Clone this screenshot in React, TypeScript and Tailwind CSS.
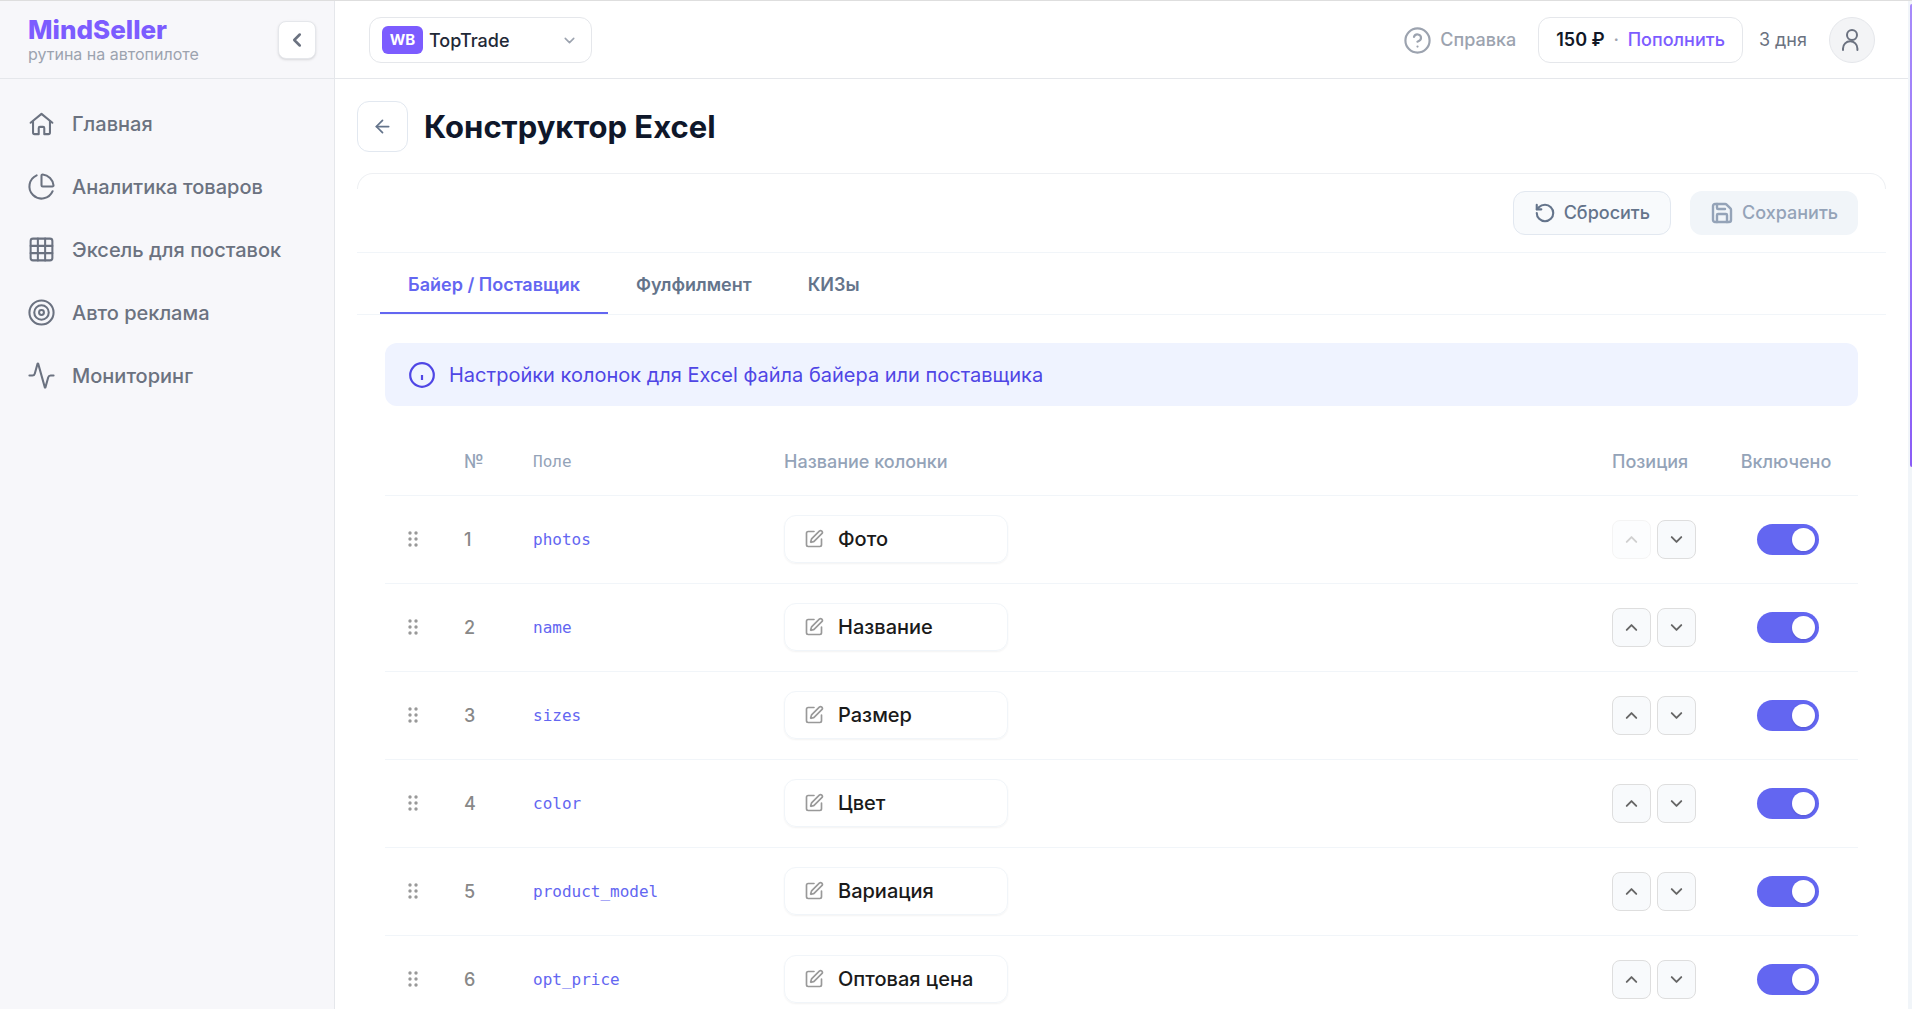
import React, { useState } from 'react';
import {
  Activity,
  ArrowLeft,
  ChartPie,
  ChevronDown,
  ChevronLeft,
  ChevronUp,
  CircleHelp,
  Grid3x3,
  RotateCcw,
  Save,
  SquarePen,
  Target,
} from 'lucide-react';

interface Column {
  field: string;
  title: string;
  enabled: boolean;
}

const INITIAL_COLUMNS: Column[] = [
  { field: 'photos', title: 'Фото', enabled: true },
  { field: 'name', title: 'Название', enabled: true },
  { field: 'sizes', title: 'Размер', enabled: true },
  { field: 'color', title: 'Цвет', enabled: true },
  { field: 'product_model', title: 'Вариация', enabled: true },
  { field: 'opt_price', title: 'Оптовая цена', enabled: true },
];

const TABS = ['Байер / Поставщик', 'Фулфилмент', 'КИЗы'];

function HomeIcon() {
  return (
    <svg width="29" height="29" viewBox="0 0 24 24" fill="none" stroke="currentColor" strokeWidth="1.7" strokeLinecap="round" strokeLinejoin="round">
      <path d="M3 11.4 12 4l9 7.4" />
      <path d="M5 10.2v9.3a1.3 1.3 0 0 0 1.3 1.3h3.4v-5a1 1 0 0 1 1-1h2.6a1 1 0 0 1 1 1v5h3.4a1.3 1.3 0 0 0 1.3-1.3v-9.3" />
    </svg>
  );
}

function UserIcon() {
  return (
    <svg width="24" height="24" viewBox="0 0 24 24" fill="none" stroke="currentColor" strokeWidth="2" strokeLinecap="round">
      <circle cx="12" cy="7" r="5" />
      <path d="M3 22v-1.5a7.2 7.2 0 0 1 14.4 0V22" />
    </svg>
  );
}

function InfoIcon() {
  return (
    <svg width="26" height="26" viewBox="0 0 26 26" fill="none" stroke="currentColor" strokeWidth="2.2" className="shrink-0">
      <circle cx="13" cy="13" r="11.8" />
      <path d="M13 13v5" />
    </svg>
  );
}

function DragIcon() {
  return (
    <svg width="12" height="18" viewBox="0 0 12 18" fill="currentColor">
      {[3, 9, 15].map((y) => (
        <React.Fragment key={y}>
          <circle cx="3" cy={y} r="1.7" />
          <circle cx="9" cy={y} r="1.7" />
        </React.Fragment>
      ))}
    </svg>
  );
}

const NAV = [
  { label: 'Главная', icon: <HomeIcon /> },
  { label: 'Аналитика товаров', icon: <ChartPie size={29} strokeWidth={1.7} /> },
  { label: 'Эксель для поставок', icon: <Grid3x3 size={29} strokeWidth={1.7} /> },
  { label: 'Авто реклама', icon: <Target size={29} strokeWidth={1.7} /> },
  { label: 'Мониторинг', icon: <Activity size={29} strokeWidth={1.7} /> },
];

function Sidebar() {
  return (
    <aside className="flex w-[335px] shrink-0 flex-col border-r border-[#e5e7eb] bg-[#f7f7fa]">
      <div className="flex h-[78px] items-center justify-between border-b border-[#e5e7eb] pr-[18px] pl-7">
        <div>
          <div className="text-[26px] leading-7 font-extrabold text-[#7c5cff]">MindSeller</div>
          <div className="text-base leading-5 text-[#9ca3af]">рутина на автопилоте</div>
        </div>
        <button
          aria-label="Свернуть меню"
          className="flex size-[38px] items-center justify-center rounded-lg border border-[#e5e7eb] bg-white text-[#6b7280] shadow-sm"
        >
          <ChevronLeft size={22} strokeWidth={2.8} />
        </button>
      </div>
      <nav className="flex flex-col pt-[13px]">
        {NAV.map((item) => (
          <a key={item.label} href="#" className="flex h-[63px] items-center gap-4 pl-[27px] text-xl font-medium text-[#6b7280]">
            {item.icon}
            {item.label}
          </a>
        ))}
      </nav>
    </aside>
  );
}

function Header() {
  return (
    <header className="flex h-[78px] shrink-0 items-center justify-between border-b border-[#e5e7eb] pt-px pr-[33px] pl-[34px]">
      <div className="relative flex h-[46px] w-[223px] items-center rounded-xl border border-[#e5e7eb] pl-3">
        <span className="flex h-7 w-[41px] items-center justify-center rounded-md bg-[#7c5cff] text-[15px] font-bold text-white">
          WB
        </span>
        <select
          aria-label="Магазин"
          className="h-full flex-1 appearance-none bg-transparent pt-[2px] pl-[6px] text-lg font-medium text-[#1f2937] outline-none"
        >
          <option>TopTrade</option>
        </select>
        <ChevronDown size={17} strokeWidth={2.2} className="pointer-events-none absolute right-[13px] text-[#9ca3af]" />
      </div>
      <div className="flex items-center text-lg font-medium">
        <a href="#" className="flex items-center gap-2 text-[#9ca3af]">
          <CircleHelp size={29} strokeWidth={1.8} />
          Справка
        </a>
        <div className="ml-[22px] flex h-[46px] items-center rounded-xl border border-[#e5e7eb] px-[17px]">
          <span className="font-semibold text-[#111827]">150 ₽</span>
          <span className="w-[23px] text-center text-[#9ca3af]">·</span>
          <button className="text-[#7c5cff]">Пополнить</button>
        </div>
        <span className="ml-4 font-normal text-[#6b7280]">3 дня</span>
        <button
          aria-label="Профиль"
          className="ml-[22px] flex size-[46px] items-center justify-center rounded-full border border-[#e5e7eb] bg-[#f3f4f6] text-[#6b7280]"
        >
          <UserIcon />
        </button>
      </div>
    </header>
  );
}

function MoveButton({ label, disabled, onClick, children }: { label: string; disabled: boolean; onClick: () => void; children: React.ReactNode }) {
  return (
    <button
      aria-label={label}
      disabled={disabled}
      onClick={onClick}
      className="flex size-[39px] items-center justify-center rounded-lg border border-[#dedede] bg-[#f8fafc] text-[#666] disabled:opacity-30"
    >
      {children}
    </button>
  );
}

function ColumnsTable() {
  const [columns, setColumns] = useState<Column[]>(INITIAL_COLUMNS);

  const update = (index: number, patch: Partial<Column>) => {
    setColumns((prev) => prev.map((col, i) => (i === index ? { ...col, ...patch } : col)));
  };

  const move = (index: number, delta: number) => {
    const target = index + delta;
    if (target < 0 || target >= columns.length) return;
    const next = [...columns];
    [next[index], next[target]] = [next[target], next[index]];
    setColumns(next);
  };

  return (
    <table className="mt-[19px] w-full table-fixed border-collapse">
      <thead>
        <tr className="h-[70px] border-b border-[#f1f5f9] text-left text-lg text-[#94a3b8]">
          <th className="w-[79px]" />
          <th className="w-[69px] pt-1 font-medium">№</th>
          <th className="w-[251px] pt-1 font-['DejaVu_Sans_Mono',monospace] text-base font-normal">Поле</th>
          <th className="pt-1 font-medium">Название колонки</th>
          <th className="w-[105px] pt-1 font-medium">Позиция</th>
          <th className="w-[141px] pt-1 pr-[3px] text-center font-medium">Включено</th>
        </tr>
      </thead>
      <tbody>
        {columns.map((col, i) => (
          <tr key={col.field} className="h-[88px] border-b border-[#f1f5f9]">
            <td className="pl-[22px] text-[#999]">
              <DragIcon />
            </td>
            <td className="pt-[2px] text-lg font-medium text-[#888]">{i + 1}</td>
            <td className="pt-[2px] font-['DejaVu_Sans_Mono',monospace] text-base text-[#6366f1]">{col.field}</td>
            <td>
              <label className="flex h-12 w-[224px] items-center gap-[14px] rounded-xl border border-[#f1f5f9] pl-[19px] shadow-xs">
                <SquarePen size={20} strokeWidth={2} className="shrink-0 text-[#999]" />
                <input
                  aria-label={`Название колонки ${col.field}`}
                  value={col.title}
                  onChange={(e) => update(i, { title: e.target.value })}
                  className="w-full min-w-0 bg-transparent text-xl font-medium text-[#1a1a1a] outline-none"
                />
              </label>
            </td>
            <td>
              <div className="flex gap-[6px]">
                <MoveButton label="Выше" disabled={i === 0} onClick={() => move(i, -1)}>
                  <ChevronUp size={19} strokeWidth={2.4} />
                </MoveButton>
                <MoveButton label="Ниже" disabled={false} onClick={() => move(i, 1)}>
                  <ChevronDown size={19} strokeWidth={2.4} />
                </MoveButton>
              </div>
            </td>
            <td>
              <label className="mx-auto flex h-[31px] w-[62px] items-center rounded-full bg-slate-300 px-1 has-checked:justify-end has-checked:bg-[#6366f1]">
                <input
                  type="checkbox"
                  aria-label={`Включить ${col.field}`}
                  checked={col.enabled}
                  onChange={(e) => update(i, { enabled: e.target.checked })}
                  className="size-[23px] appearance-none rounded-full bg-white shadow-sm"
                />
              </label>
            </td>
          </tr>
        ))}
      </tbody>
    </table>
  );
}

export default function App() {
  const [activeTab, setActiveTab] = useState(0);

  return (
    <div className="flex h-screen overflow-hidden border-t border-[#dedede] bg-white font-['Inter',sans-serif]">
      <Sidebar />
      <div className="flex min-w-0 flex-1 flex-col">
        <Header />
        <main className="px-[22px] pt-[22px]">
          <div className="flex items-center gap-4">
            <button
              aria-label="Назад"
              className="flex size-[51px] items-center justify-center rounded-xl border border-[#e2e8f0] text-[#64748b]"
            >
              <ArrowLeft size={21} strokeWidth={2} />
            </button>
            <h1 className="text-[31px] leading-10 font-bold text-[#0f172a]">Конструктор Excel</h1>
          </div>

          <section className="mt-[21px]">
            {/* rounded top edge of the card */}
            <div className="h-4 rounded-t-2xl border-x border-t border-[#eef0f3]" />
            <div className="flex h-16 items-start justify-end gap-[19px] border-b border-[#f1f5f9] pt-[2px] pr-7 text-lg font-medium">
              <button className="flex h-11 items-center gap-2 rounded-xl border border-[#e2e8f0] bg-[#f8fafc] px-5 text-[#64748b]">
                <RotateCcw size={22} strokeWidth={2.3} />
                Сбросить
              </button>
              <button disabled className="flex h-11 items-center gap-2 rounded-xl bg-[#f1f5f9] px-5 text-[#94a3b8]">
                <Save size={24} strokeWidth={2.4} />
                Сохранить
              </button>
            </div>

            <div role="tablist" className="flex h-[62px] border-b border-[#f1f5f9] pl-[23px]">
              {TABS.map((tab, i) => (
                <button
                  key={tab}
                  role="tab"
                  aria-selected={i === activeTab}
                  onClick={() => setActiveTab(i)}
                  className="border-b-2 border-transparent px-7 pt-1 text-lg font-semibold text-[#64748b] aria-selected:border-[#6366f1] aria-selected:text-[#6366f1]"
                >
                  {tab}
                </button>
              ))}
            </div>

            <div className="px-7 pt-7">
              <div className="flex h-[63px] items-center gap-[14px] rounded-xl bg-[#eff3ff] px-6 text-xl text-[#4f46e5]">
                <InfoIcon />
                Настройки колонок для Excel файла байера или поставщика
              </div>
              <ColumnsTable />
            </div>
          </section>
        </main>
      </div>

      {/* page scrollbar */}
      <div className="flex w-1 shrink-0 flex-col items-end bg-[#f1f5f9] pt-[3px]">
        <div className="h-[463px] w-[2px] rounded-l-sm bg-linear-to-b from-[#a78bfa] to-[#8b5cf6]" />
      </div>
    </div>
  );
}
